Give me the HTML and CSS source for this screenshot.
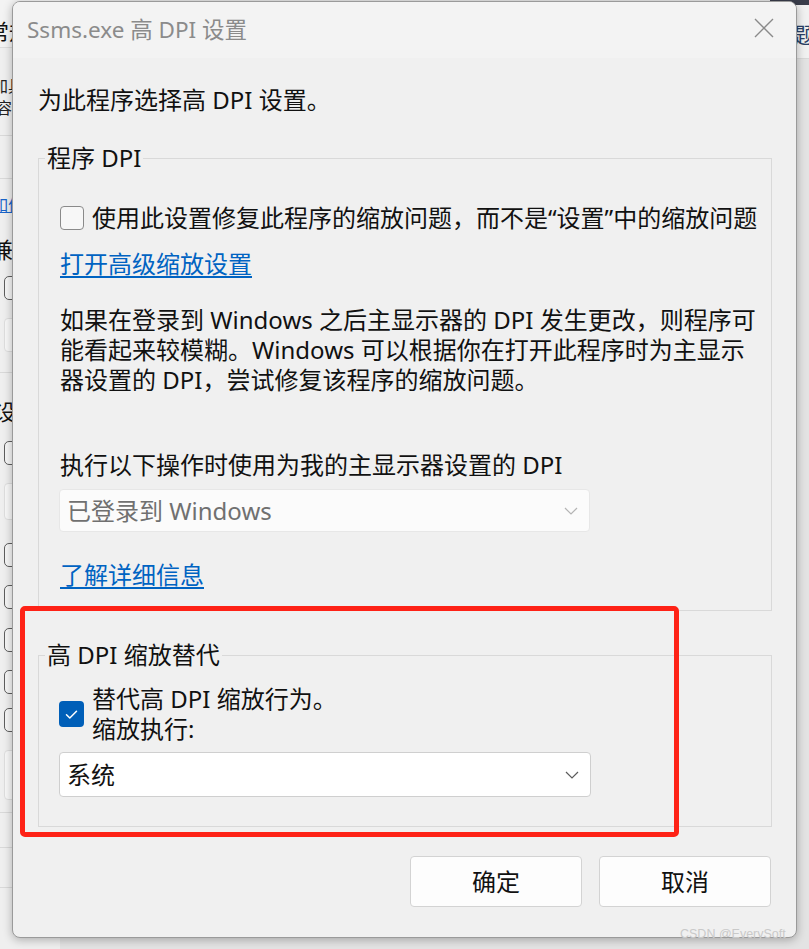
FILE: index.html
```html
<!DOCTYPE html>
<html lang="zh-CN">
<head>
<meta charset="utf-8">
<title>Ssms.exe 高 DPI 设置</title>
<link rel="stylesheet" href="styles.css">
</head>
<body>
<div class="desk">
  <div class="bgwin bg-left">
    <div class="bg-head"><span class="bg-h1">常规</span></div>
    <div class="bg-txt">加具<br><span class="bg-shift">兼容性</span></div>
    <div class="bg-hr hr1"></div>
    <div class="bg-hr hr2"></div>
    <div class="bg-link">如何</div>
    <div class="bg-title t1">兼容性</div>
    <div class="bg-cb cb1"></div>
    <div class="bg-box bx1"></div>
    <div class="bg-hr hr3"></div>
    <div class="bg-title t2">设置</div>
    <div class="bg-cb cb2"></div>
    <div class="bg-box bx2"></div>
    <div class="bg-cb cb3"></div>
    <div class="bg-cb cb4"></div>
    <div class="bg-cb cb5"></div>
    <div class="bg-cb cb6"></div>
    <div class="bg-cb cb7"></div>
    <div class="bg-box bx3"></div>
    <div class="bg-hr hr4"></div>
    <div class="bg-hr hr5"></div>
    <div class="bg-hr hr6"></div>
  </div>
  <div class="bgwin bg-right">
    <div class="bgr-top"></div>
    <div class="bgr-head"><span class="bgr-char">题</span></div>
  </div>

  <div class="dialog">
    <div class="titlebar">
      <span class="title">Ssms.exe 高 DPI 设置</span>
      <svg class="close" width="20" height="20" viewBox="0 0 20 20"><path d="M1 1 L19 19 M19 1 L1 19" stroke="#8a8a8a" stroke-width="1.4" fill="none"/></svg>
    </div>
    <div class="body">
      <p class="intro">为此程序选择高 DPI 设置。</p>
      <fieldset class="group g1">
        <legend>程序 DPI</legend>
        <div class="check">
          <span class="box"></span>
          <span class="check-text">使用此设置修复此程序的缩放问题，而不是“设置”中的缩放问题</span>
        </div>
        <a class="link l1">打开高级缩放设置</a>
        <p class="para">如果在登录到 Windows 之后主显示器的 DPI 发生更改，则程序可<br>能看起来较模糊。Windows 可以根据你在打开此程序时为主显示<br>器设置的 DPI，尝试修复该程序的缩放问题。</p>
        <p class="label">执行以下操作时使用为我的主显示器设置的 DPI</p>
        <div class="select disabled">
          <span>已登录到 Windows</span>
          <svg width="14" height="8" viewBox="0 0 14 8"><path d="M1 1 L7 7 L13 1" stroke="#b4b4b4" stroke-width="1.2" fill="none"/></svg>
        </div>
        <a class="link l2">了解详细信息</a>
      </fieldset>
      <fieldset class="group g2">
        <legend>高 DPI 缩放替代</legend>
        <div class="check c2">
          <span class="box checked"><svg width="25" height="25" viewBox="0 0 25 25"><path d="M7.5 12.8 L10.8 16 L17.5 9.2" stroke="#ffffff" stroke-width="1.5" fill="none" stroke-linecap="round" stroke-linejoin="round"/></svg></span>
          <span class="check-text">替代高 DPI 缩放行为。<br>缩放执行:</span>
        </div>
        <div class="select">
          <span>系统</span>
          <svg width="14" height="8" viewBox="0 0 14 8"><path d="M1 1 L7 7 L13 1" stroke="#5c5c5c" stroke-width="1.2" fill="none"/></svg>
        </div>
      </fieldset>
      <div class="buttons">
        <button class="btn">确定</button>
        <button class="btn">取消</button>
      </div>
    </div>
  </div>

  <div class="redbox"></div>
  <div class="watermark">CSDN @EverySoft</div>
</div>
</body>
</html>
```
FILE: styles.css
```css
* { box-sizing: border-box; }
html, body {
  margin: 0;
  padding: 0;
  width: 809px;
  height: 949px;
  overflow: hidden;
}
body {
  font-family: "Noto Sans", "Noto Sans CJK SC", sans-serif;
  color: #1a1a1a;
  background: #e6e6e6;
}
.desk {
  position: relative;
  width: 809px;
  height: 949px;
  overflow: hidden;
  background: #e4e4e4;
}

/* background windows */
.bgwin {
  position: absolute;
  top: 0;
  overflow: hidden;
}
.bg-left {
  left: 0;
  width: 60px;
  height: 949px;
  background: #efefef;
  display: flex;
  flex-direction: column;
  align-items: flex-start;
}
.bg-head {
  width: 60px;
  height: 48px;
  border-bottom: 1px solid #dcdcdc;
  background: #f3f3f3;
  padding-top: 15px;
  font-family: "Noto Sans CJK SC", sans-serif;
  font-size: 22px;
  line-height: 30px;
  color: #111;
  white-space: nowrap;
}
.bg-h1 { margin-left: -13px; }
.bg-txt {
  margin-top: 26px;
  margin-left: -8px;
  font-family: "Noto Sans CJK SC", sans-serif;
  font-size: 16px;
  line-height: 22px;
  color: #222;
  white-space: nowrap;
}
.bg-shift { margin-left: -12px; }
.bg-hr {
  width: 60px;
  height: 1px;
  background: #d9d9d9;
  flex: none;
}
.hr1 { margin-top: 17px; }
.hr2 { margin-top: 42px; }
.hr3 { margin-top: 20px; }
.hr4 { margin-top: 12px; }
.hr5 { margin-top: 34px; }
.hr6 { margin-top: 39px; }
.bg-link {
  margin-top: 15px;
  margin-left: -8px;
  font-family: "Noto Sans CJK SC", sans-serif;
  font-size: 16px;
  line-height: 20px;
  color: #1a64c8;
  text-decoration: underline;
  white-space: nowrap;
}
.bg-title {
  font-family: "Noto Sans CJK SC", sans-serif;
  font-size: 22px;
  line-height: 30px;
  color: #111;
  white-space: nowrap;
}
.t1 { margin-top: 19px; margin-left: -9px; }
.t2 { margin-top: 22px; margin-left: -6px; }
.bg-cb {
  flex: none;
  width: 22px;
  height: 24px;
  margin-left: 4px;
  border: 1.5px solid #5e5e5e;
  border-radius: 5px;
  background: #f6f6f6;
}
.cb1 { margin-top: 13px; }
.cb2 { margin-top: 16px; }
.cb3 { margin-top: 23px; }
.cb4 { margin-top: 18px; }
.cb5 { margin-top: 19px; }
.cb6 { margin-top: 18px; }
.cb7 { margin-top: 14px; }
.bg-box {
  flex: none;
  width: 40px;
  margin-left: 4px;
  border: 1px solid #dedede;
  border-radius: 4px;
  background: #f8f8f8;
}
.bx1 { margin-top: 18px; height: 34px; }
.bx2 { margin-top: 18px; height: 37px; }
.bx3 { margin-top: 18px; height: 50px; }

.bg-right {
  left: 770px;
  width: 39px;
  height: 949px;
  background: #e3e3e3;
}
.bgr-top {
  height: 5px;
  background: #393d4b;
}
.bgr-head {
  height: 54px;
  background: #f1f1f1;
  border-bottom: 1px solid #d8d8d8;
  padding-top: 13px;
  padding-left: 24px;
  font-family: "Noto Sans CJK SC", sans-serif;
  font-size: 22px;
  line-height: 30px;
  color: #2a3f66;
  white-space: nowrap;
}

/* dialog */
.dialog {
  position: absolute;
  left: 12px;
  top: 1px;
  width: 785px;
  height: 937px;
  border: 1px solid #9a9a9a;
  border-radius: 8px;
  background: #f0f0f0;
  box-shadow: 0 2px 10px rgba(0, 0, 0, 0.28);
  overflow: hidden;
  display: flex;
  flex-direction: column;
}
.titlebar {
  height: 56px;
  flex: none;
  background: #f3f3f3;
  display: flex;
  align-items: center;
  justify-content: space-between;
  padding-left: 14px;
  padding-right: 22px;
}
.title {
  font-size: 22.5px;
  line-height: 30px;
  color: #8b8b8b;
  white-space: nowrap;
}
.close {
  display: block;
  margin-top: -4px;
}
.body {
  padding: 27px 24px 0 25px;
  font-size: 24px;
  line-height: 30px;
  color: #111;
}
.intro {
  margin: 0;
  white-space: nowrap;
}
.group {
  margin: 28px 0 0 0;
  padding: 30px 10px 20px 21px;
  border: 1px solid #d9d9d9;
  min-width: 0;
}
.group legend {
  padding: 0 2px;
  margin-left: -15px;
  line-height: 30px;
  white-space: nowrap;
}
.check {
  display: flex;
  align-items: center;
  gap: 8px;
}
.check-text { white-space: nowrap; }
.box {
  flex: none;
  width: 24px;
  height: 24px;
  border: 1px solid #8a8a8a;
  border-radius: 4px;
  background: #f7f7f7;
}
.box.checked {
  width: 25px;
  height: 26px;
  border: none;
  background: #005fb8;
  margin-left: -1px;
  display: flex;
  align-items: center;
  justify-content: center;
}
.box.checked svg { display: block; }
.link {
  display: block;
  color: #0063c2;
  text-decoration: underline;
  text-underline-offset: 3px;
  text-decoration-thickness: 1.5px;
  white-space: nowrap;
  width: fit-content;
}
.l1 { margin-top: 16px; }
.para {
  margin: 26px 0 0 0;
  white-space: nowrap;
}
.label {
  margin: 55px 0 0 0;
  white-space: nowrap;
}
.select {
  display: flex;
  align-items: center;
  justify-content: space-between;
  margin-left: -1px;
  width: 532px;
  height: 45px;
  margin-top: 8px;
  padding: 0 11px 0 7px;
  background: #ffffff;
  border: 1px solid #cfcfcf;
  border-radius: 4px;
}
.select svg { display: block; }
.select.disabled {
  width: 531px;
  height: 43px;
  margin-top: 9px;
  background: #fbfbfb;
  border-color: #e7e7e7;
  color: #707070;
  padding-right: 11px;
}
.l2 { margin-top: 28px; }
.g2 {
  margin-top: 29px;
  padding-top: 14px;
  padding-bottom: 29px;
}
.buttons {
  display: flex;
  justify-content: flex-end;
  gap: 17px;
  margin-top: 29px;
  margin-right: 1px;
}
.btn {
  width: 172px;
  height: 51px;
  background: #fdfdfd;
  border: 1px solid #d3d3d3;
  border-radius: 4px;
  font-family: "Noto Sans", "Noto Sans CJK SC", sans-serif;
  font-size: 24px;
  line-height: 30px;
  color: #111;
  padding: 0;
}

/* annotation overlay */
.redbox {
  position: absolute;
  left: 20px;
  top: 606px;
  width: 659px;
  height: 231px;
  border: 5px solid #fe2216;
  border-radius: 5px;
}
.watermark {
  position: absolute;
  left: 680px;
  top: 925px;
  font-family: "Liberation Sans", sans-serif;
  font-size: 12.5px;
  line-height: 18px;
  color: #c9c9c9;
  white-space: nowrap;
}
```
